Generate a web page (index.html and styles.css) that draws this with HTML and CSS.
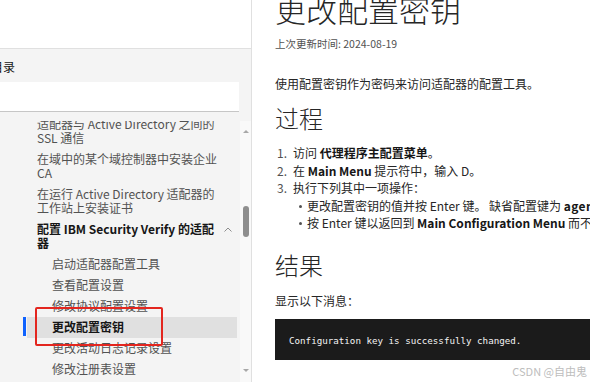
FILE: index.html
```html
<!DOCTYPE html>
<html lang="zh-CN">
<head>
<meta charset="UTF-8">
<meta name="viewport" content="width=device-width,initial-scale=1">
<title>更改配置密钥</title>
<link rel="stylesheet" href="styles.css">
</head>
<body>

<div class="page">
  <aside class="side">
    <div class="side-top"></div>
    <nav class="toc">
      <div class="toc-title">目录</div>
      <div class="toc-search"></div>
      <div class="toc-body">
        <div class="toc-scroll">
          <ul class="toc-list">
            <li>适配器与 Active Directory 之间的 SSL 通信</li>
            <li>在域中的某个域控制器中安装企业 CA</li>
            <li>在运行 Active Directory 适配器的工作站上安装证书</li>
            <li class="group">
              <span>配置 IBM Security Verify 的适配器</span>
              <svg class="chev" width="8" height="5" viewBox="0 0 8 5"><path d="M0.5 4.5 L4 1 L7.5 4.5" fill="none" stroke="#8d8d8d" stroke-width="1"/></svg>
            </li>
            <li class="sub">启动适配器配置工具</li>
            <li class="sub">查看配置设置</li>
            <li class="sub">修改协议配置设置</li>
            <li class="sub active">更改配置密钥</li>
            <li class="sub">更改活动日志记录设置</li>
            <li class="sub">修改注册表设置</li>
          </ul>
        </div>
        <div class="scrollbar">
          <span class="arrow up"></span>
          <span class="thumb"></span>
          <span class="arrow down"></span>
        </div>
      </div>
    </nav>
  </aside>

  <main class="content">
    <h1>更改配置密钥</h1>
    <p class="updated">上次更新时间: 2024-08-19</p>
    <p class="intro">使用配置密钥作为密码来访问适配器的配置工具。</p>

    <h2>过程</h2>
    <ol class="steps">
      <li>访问 <b>代理程序主配置菜单</b>。</li>
      <li>在 <b>Main Menu</b> 提示符中，输入 D。</li>
      <li>执行下列其中一项操作：
        <ul>
          <li>更改配置密钥的值并按 Enter 键。 缺省配置键为 <b class="mono-b">agent</b>。</li>
          <li>按 Enter 键以返回到 <b>Main Configuration Menu</b> 而不更改配置密钥。</li>
        </ul>
      </li>
    </ol>

    <h2 class="result">结果</h2>
    <p class="msg">显示以下消息：</p>
    <pre class="code">Configuration key is successfully changed.</pre>
  </main>
</div>

<div class="watermark">CSDN @自由鬼</div>

</body>
</html>
```

FILE: styles.css
```css
:root{
  --text:      #161616;
  --text-2:    #525252;
  --nav-bg:    #f4f4f4;
  --line:      #e0e0e0;
  --blue:      #0f62fe;
  --mark:      #e3261f;
}
*{box-sizing:border-box;margin:0;padding:0}
html,body{height:100%}
body{
  font-family:"Noto Sans CJK SC","Noto Sans",sans-serif;
  color:var(--text);
  background:#fff;
  overflow:hidden;
}
.page{
  display:flex;
  height:100vh;
}

/* ---------- 左侧目录 ------------- */
.side{
  width:252px;
  flex:none;
  display:flex;
  flex-direction:column;
  border-right:1px solid var(--line);
}
.side-top{
  height:49px;
  flex:none;
  border-bottom:1px solid var(--line);
}
.toc{
  flex:1;
  min-height:0;
  display:flex;
  flex-direction:column;
  background:var(--nav-bg);
}
.toc-title{
  font-size:12px;
  line-height:17px;
  padding-top:8.5px;
  text-indent:-9px;
  white-space:nowrap;
}
.toc-search{
  width:239px;
  height:30px;
  margin-top:7.5px;
  background:#fff;
  border-bottom:1px solid #c6c6c6;
}
.toc-body{
  flex:1;
  min-height:0;
  display:flex;
  margin-top:9px;
}
.toc-scroll{
  width:240px;
  overflow:hidden;
}
.toc-list{
  list-style:none;
  margin-top:-7.25px;
  font-size:12px;
  line-height:14.5px;
  color:var(--text-2);
}
.toc-list li{
  padding:3px 20px 3px 37px;
}
.toc-list li.group{
  display:flex;
  align-items:flex-start;
  gap:4px;
  padding-right:8px;
  color:var(--text);
  font-weight:700;
}
.toc-list li.group span{flex:1}
.chev{flex:none;margin-top:5px}
.toc-list li.sub{
  margin:0 3px 0 27px;
  padding:3.25px 0 3.25px 25px;
}
.toc-list li.active{
  position:relative;
  background:var(--line);
  color:var(--text);
  font-weight:700;
}
.toc-list li.active::before{
  content:"";
  position:absolute;
  left:-4px;top:0;bottom:2px;
  width:3px;
  background:var(--blue);
}
/* 红色标注框 */
.toc-list li.active::after{
  content:"";
  position:absolute;
  left:8px;top:-10px;
  width:124px;height:35px;
  border:2px solid var(--mark);
  border-radius:2px;
}

.scrollbar{
  width:11px;
  flex:none;
  display:flex;
  flex-direction:column;
  align-items:center;
  background:#f9f9f9;
}
.arrow{
  width:0;height:0;
  border-left:3px solid transparent;
  border-right:3px solid transparent;
}
.arrow.up{
  border-bottom:3px solid #a8a8a8;
  margin-top:9px;
}
.arrow.down{
  border-top:3px solid #a8a8a8;
  margin-top:auto;
  margin-bottom:10px;
}
.thumb{
  width:6px;height:31px;
  margin-top:73px;
  border-radius:3px;
  background:#8f8f8f;
}

/* ---------- 正文 ------------- */
.content{
  flex:1;
  min-width:0;
  overflow:hidden;
  padding-left:23px;
  white-space:nowrap;
}
h1,h2{
  font-family:"Noto Sans CJK SC Light","Noto Sans CJK SC",sans-serif;
  font-weight:300;
  color:#262626;
}
h1{
  font-size:31px;
  line-height:36px;
  margin-top:-9px;
}
.updated{
  font-size:10.5px;
  line-height:14px;
  margin-top:10px;
  color:var(--text-2);
}
.intro,.msg{
  font-size:12px;
  line-height:17px;
  color:#262626;
}
.intro{margin-top:23.5px}
h2{
  font-size:24px;
  line-height:30px;
  margin-top:11.5px;
}
h2.result{margin-top:18.25px}
.msg{margin-top:11.5px}

.steps{
  list-style:none;
  counter-reset:step;
  margin-top:11.25px;
  font-size:12px;
  line-height:17.5px;
  color:#262626;
}
.steps > li{
  counter-increment:step;
  padding-left:18px;
}
.steps > li::before{
  content:counter(step) ".";
  display:inline-block;
  width:16px;
  margin-left:-16px;
  color:var(--text-2);
}
.steps b{font-weight:700;color:var(--text)}
.steps ul{
  list-style:none;
  padding-left:14px;
}
.steps ul li::before{
  content:"";
  display:inline-block;
  width:3px;height:3px;
  margin:0 5px 2px -8px;
  vertical-align:middle;
  border-radius:50%;
  background:var(--text-2);
}
.mono-b{letter-spacing:.4px}

.code{
  margin-top:10.5px;
  height:41px;
  padding:14.5px 14px 0;
  background:#1b1b1b;
  color:#f4f4f4;
  font-family:"DejaVu Sans Mono","Liberation Mono",monospace;
  font-size:9.2px;
  line-height:13px;
}

.watermark{
  position:absolute;
  right:3px;bottom:3px;
  font-size:11px;
  line-height:15px;
  color:#bdbdbd;
  white-space:nowrap;
}
```
